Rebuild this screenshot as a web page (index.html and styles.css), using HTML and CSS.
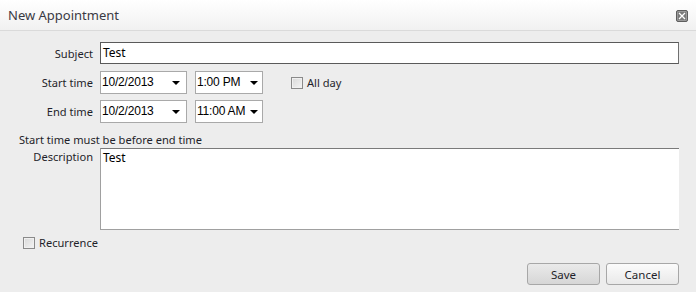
FILE: index.html
```html
<!DOCTYPE html>
<html lang="en">
<head>
  <meta charset="UTF-8">
  <title>New Appointment</title>
  <link rel="stylesheet" href="styles.css">
</head>
<body>

  <div class="dialog">
    <div class="titlebar">
      <span class="title">New Appointment</span>
      <span class="close">
        <svg width="8" height="8" viewBox="0 0 8 8"><path d="M1 1 L7 7 M7 1 L1 7" stroke="#fff" stroke-width="1.3"/></svg>
      </span>
    </div>

    <div class="content">
      <div class="row row-subject">
        <label class="lbl">Subject</label>
        <div class="text wide">Test</div>
      </div>

      <div class="row row-start">
        <label class="lbl">Start time</label>
        <div class="select date">10/2/2013<span class="arrow"></span></div>
        <div class="select time">1:00 PM<span class="arrow"></span></div>
        <span class="check allday"></span><span class="check-lbl">All day</span>
      </div>

      <div class="row row-end">
        <label class="lbl">End time</label>
        <div class="select date">10/2/2013<span class="arrow"></span></div>
        <div class="select time">11:00 AM<span class="arrow"></span></div>
      </div>

      <p class="msg">Start time must be before end time</p>

      <div class="row row-desc">
        <label class="lbl">Description</label>
        <div class="area">Test</div>
      </div>

      <div class="recur">
        <span class="check"></span><span class="check-lbl">Recurrence</span>
      </div>

      <div class="buttons">
        <button class="btn btn-save">Save</button>
        <button class="btn btn-cancel">Cancel</button>
      </div>
    </div>
  </div>

</body>
</html>
```

FILE: styles.css
```css
body {
  margin: 0;
  padding: 0;
  background: #ededed;
  font-family: "Noto Sans", "Open Sans", sans-serif;
  font-size: 11.1px;
  color: #1f1f2a;
}

.dialog {
  width: 696px;
  height: 292px;
  background: #ededed;
}

.titlebar {
  height: 30px;
  border-bottom: 1px solid #dadada;
  background: linear-gradient(#ffffff, #f1f1f1);
  display: flex;
  align-items: center;
  justify-content: space-between;
  padding: 0 8px 0 8px;
}

.title {
  font-size: 13px;
  color: #3a3a44;
  margin-top: -1px;
}

.close {
  width: 10px;
  height: 10px;
  background: #7a7a7a;
  border: 1px solid #5e5e5e;
  border-radius: 2px;
  box-shadow: inset 0 0 0 1px #9a9a9a;
  display: flex;
  align-items: center;
  justify-content: center;
  margin-top: 1px;
}

.content {
  padding: 11px 17px 0 7px;
}

.row {
  display: flex;
  align-items: center;
}

.lbl {
  width: 86px;
  text-align: right;
  margin-right: 7px;
  flex-shrink: 0;
}

.row-start {
  margin-top: 7px;
}

.row-end {
  margin-top: 6px;
}

.text {
  height: 20px;
  line-height: 20px;
  border: 1px solid #5a5a5a;
  border-right-color: #707070;
  background: #fff;
  padding: 0 2px;
  color: #000;
  font-size: 12px;
  box-sizing: content-box;
}

.wide {
  flex: 1;
}

.select {
  position: relative;
  height: 21px;
  line-height: 21px;
  border: 1px solid #a9a9a9;
  background: #fff;
  color: #000;
  font-family: "Liberation Sans", Arial, sans-serif;
  font-size: 12px;
  letter-spacing: -0.2px;
  padding-left: 1px;
  box-sizing: content-box;
}

.date {
  width: 84px;
  margin-right: 8px;
}

.time {
  width: 65px;
}

.arrow {
  position: absolute;
  right: 6px;
  top: 9px;
  border-left: 4px solid transparent;
  border-right: 4px solid transparent;
  border-top: 4px solid #000;
}

.time .arrow {
  right: 4px;
}

.check {
  display: inline-block;
  width: 10px;
  height: 10px;
  border: 1px solid #8a8a8a;
  background: linear-gradient(135deg, #d8d8d8, #f4f4f4);
  box-shadow: inset 0 0 0 1px #f0f0f0;
}

.allday {
  margin-left: 28px;
}

.check-lbl {
  margin-left: 4px;
}

.msg {
  margin: 8px 0 0 12px;
  height: 17px;
  line-height: 17px;
}

.row-desc {
  align-items: flex-start;
}

.row-desc .lbl {
  margin-top: 1px;
}

.area {
  flex: 1;
  height: 80px;
  border: 1px solid #a0a0a0;
  border-top-color: #7a7a7a;
  border-right: none;
  background: #fff;
  color: #000;
  font-size: 12px;
  padding: 0 2px;
}

.recur {
  display: flex;
  align-items: center;
  margin: 5px 0 0 16px;
}

.buttons {
  display: flex;
  justify-content: flex-end;
  gap: 6px;
  margin-top: 13px;
}

.btn {
  height: 22px;
  border: 1px solid #a7a7a7;
  border-radius: 3px;
  font-family: "Noto Sans", "Open Sans", sans-serif;
  font-size: 11.5px;
  color: #1f1f2a;
  padding: 0;
}

.btn-save {
  width: 73px;
  background: linear-gradient(#eaeaea, #d6d6d6);
}

.btn-cancel {
  width: 73px;
  background: linear-gradient(#fbfbfb, #e9e9e9);
}
```
